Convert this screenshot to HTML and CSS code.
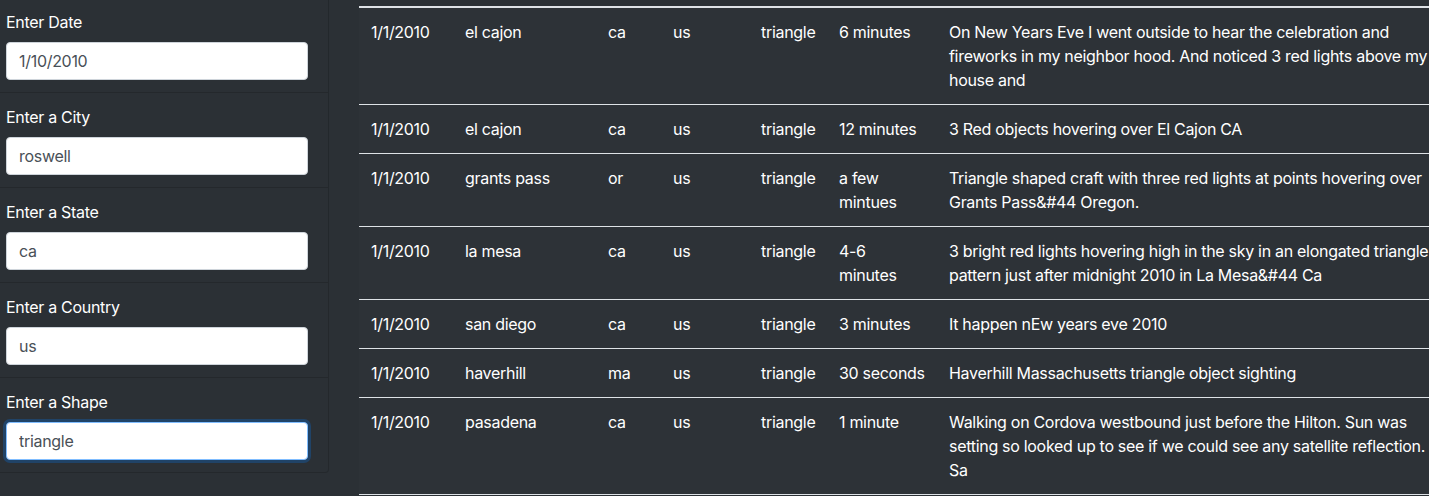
FILE: index.html
```html
<!DOCTYPE html>
<html lang="en">
<head>
<meta charset="utf-8">
<title>UFO Sightings</title>
<link rel="stylesheet" href="styles.css">
</head>
<body>
<div class="page">
  <aside class="filters">
    <ul class="filter-list">
      <li class="filter-item">
        <label class="filter-label" for="datetime">Enter Date</label>
        <input class="filter-input" id="datetime" type="text" value="1/10/2010">
      </li>
      <li class="filter-item">
        <label class="filter-label" for="city">Enter a City</label>
        <input class="filter-input" id="city" type="text" value="roswell">
      </li>
      <li class="filter-item">
        <label class="filter-label" for="state">Enter a State</label>
        <input class="filter-input" id="state" type="text" value="ca">
      </li>
      <li class="filter-item">
        <label class="filter-label" for="country">Enter a Country</label>
        <input class="filter-input" id="country" type="text" value="us">
      </li>
      <li class="filter-item">
        <label class="filter-label" for="shape">Enter a Shape</label>
        <input class="filter-input" id="shape" type="text" value="triangle" autofocus>
      </li>
    </ul>
  </aside>
  <main class="results">
    <table class="ufo-table">
      <colgroup>
        <col class="c-date"><col class="c-city"><col class="c-state"><col class="c-country"><col class="c-shape"><col class="c-duration"><col class="c-comments">
      </colgroup>
      <tbody>
        <tr><td>1/1/2010</td><td>el cajon</td><td>ca</td><td>us</td><td>triangle</td><td>6 minutes</td><td>On New Years Eve I went outside to hear the celebration and fireworks in my neighbor hood. And noticed 3 red lights above my house and</td></tr>
        <tr><td>1/1/2010</td><td>el cajon</td><td>ca</td><td>us</td><td>triangle</td><td>12 minutes</td><td>3 Red objects hovering over El Cajon CA</td></tr>
        <tr><td>1/1/2010</td><td>grants pass</td><td>or</td><td>us</td><td>triangle</td><td>a few mintues</td><td>Triangle shaped craft with three red lights at points hovering over Grants Pass&amp;#44 Oregon.</td></tr>
        <tr><td>1/1/2010</td><td>la mesa</td><td>ca</td><td>us</td><td>triangle</td><td>4-6 minutes</td><td>3 bright red lights hovering high in the sky in an elongated triangle pattern just after midnight 2010 in La Mesa&amp;#44 Ca</td></tr>
        <tr><td>1/1/2010</td><td>san diego</td><td>ca</td><td>us</td><td>triangle</td><td>3 minutes</td><td>It happen nEw years eve 2010</td></tr>
        <tr><td>1/1/2010</td><td>haverhill</td><td>ma</td><td>us</td><td>triangle</td><td>30 seconds</td><td>Haverhill Massachusetts triangle object sighting</td></tr>
        <tr><td>1/1/2010</td><td>pasadena</td><td>ca</td><td>us</td><td>triangle</td><td>1 minute</td><td>Walking on Cordova westbound just before the Hilton. Sun was setting so looked up to see if we could see any satellite reflection. Sa</td></tr>
      </tbody>
    </table>
  </main>
</div>
<script src="app.js"></script>
</body>
</html>
```

FILE: styles.css
```css
html, body {
  margin: 0;
  padding: 0;
  height: 100%;
  overflow: hidden;
}

body {
  background: #2b3035;
  color: #fff;
  font-family: Inter, "Liberation Sans", Arial, sans-serif;
  font-size: 16px;
  line-height: 24px;
  letter-spacing: -0.3px;
}

.page {
  display: flex;
  align-items: flex-start;
  gap: 30px;
}

.filters {
  flex: 0 0 329px;
}

.filter-list {
  list-style: none;
  margin: 0;
  padding: 0;
  border-right: 1px solid rgba(0, 0, 0, 0.16);
  border-bottom: 1px solid rgba(0, 0, 0, 0.16);
  border-bottom-right-radius: 4px;
}

.filter-item {
  display: flex;
  flex-direction: column;
  align-items: flex-start;
  padding: 12px 20px 12px 6px;
  border-bottom: 1px solid rgba(0, 0, 0, 0.16);
}

.filter-item:first-child {
  padding-top: 10px;
}

.filter-item:last-child {
  border-bottom: 0;
}

.filter-label {
  display: block;
  margin-bottom: 8px;
  color: #fff;
}

.filter-input {
  box-sizing: border-box;
  width: 302px;
  height: 38px;
  padding: 6px 12px;
  font-family: inherit;
  font-size: 16px;
  line-height: 24px;
  letter-spacing: -0.3px;
  color: #495057;
  background: #fff;
  border: 1px solid #ced4da;
  border-radius: 4px;
  outline: none;
  margin: 0;
}

.filter-input:focus {
  border-color: #80bdff;
  box-shadow: 0 0 0 3px rgba(0, 123, 255, 0.25);
  caret-color: #212529;
}

.results {
  flex: 0 0 auto;
  padding-top: 6px;
}

.ufo-table {
  width: 1092px;
  table-layout: fixed;
  border-collapse: collapse;
  background: #2d3237;
  color: #fff;
  border-top: 2px solid #dee2e6;
}

.c-date { width: 94px; }
.c-city { width: 143px; }
.c-state { width: 65px; }
.c-country { width: 88px; }
.c-shape { width: 78px; }
.c-duration { width: 110px; }
.c-comments { width: 514px; }

.ufo-table td {
  padding: 12px;
  vertical-align: top;
  border-bottom: 1px solid #dee2e6;
}
```

FILE: app.js
```js
var shape = document.getElementById('shape');
shape.focus();
shape.setSelectionRange(shape.value.length, shape.value.length);
```
